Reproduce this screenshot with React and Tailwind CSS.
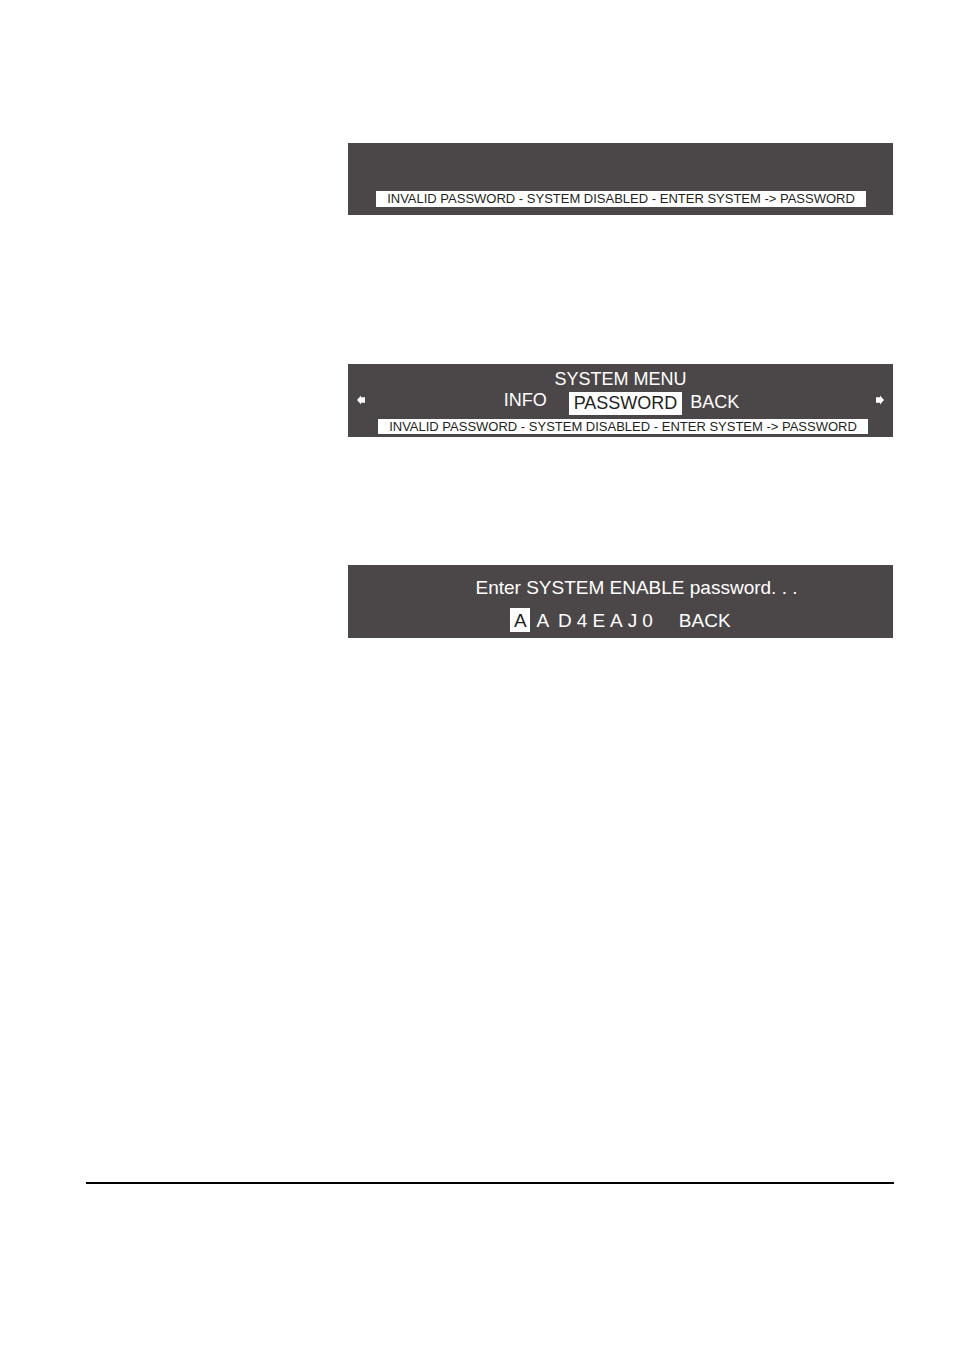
const WARNING = 'INVALID PASSWORD - SYSTEM DISABLED - ENTER SYSTEM -> PASSWORD';

const characters = ['A', 'D', '4', 'E', 'A', 'J', '0'];

function Arrow({ className = '' }) {
  return (
    <svg viewBox="0 0 8 10" className={`w-2 h-[10px] ${className}`} fill="currentColor" aria-hidden="true">
      <path d="M0 5 L4 0.5 V2.2 H8 V7.8 H4 V9.5 Z" />
    </svg>
  );
}

function Panel({ label, className = '', children }) {
  return (
    <section aria-label={label} className={`bg-[#4b4748] text-white ${className}`}>
      {children}
    </section>
  );
}

export default function App() {
  return (
    <div className="min-h-screen bg-white pt-[143px] pl-[86px] pr-[60px] pb-40 font-['Liberation_Sans',Arial,sans-serif]">
      <main className="ml-[262px] mr-px">
        {/* System disabled */}
        <Panel label="System disabled" className="pt-12 pb-2 pl-7 pr-[27px]">
          <p className="bg-white text-[#231f20] text-[13px] leading-4 text-center">{WARNING}</p>
        </Panel>

        {/* System menu */}
        <Panel label="System menu" className="mt-[149px] pt-[3px] pb-[3px]">
          <h2 className="text-[18px] leading-6 text-center">SYSTEM MENU</h2>
          <div className="flex items-start justify-between mt-px px-2 text-[18px]">
            <button type="button" aria-label="Previous" className="flex w-10 h-4 items-center"><Arrow className="ml-px" /></button>
            <nav className="flex items-start pl-[2px]">
              <button type="button" className="leading-4 mr-[22px]">INFO</button>
              <button type="button" className="bg-white text-[#231f20] leading-[23px] px-[5px]">PASSWORD</button>
              <button type="button" className="leading-5 ml-2">BACK</button>
            </nav>
            <button type="button" aria-label="Next" className="flex w-10 h-4 items-center justify-end"><Arrow className="mr-px rotate-180" /></button>
          </div>
          <p className="mt-1 ml-[30px] mr-[25px] bg-white text-[#231f20] text-[13px] leading-[15px] text-center">{WARNING}</p>
        </Panel>

        {/* Password entry */}
        <Panel label="Password entry" className="mt-32 pt-[11px] pb-[6px]">
          <p className="text-[19px] leading-6 text-center pl-8">Enter SYSTEM ENABLE password. . .</p>
          <div className="flex justify-center mt-2 text-[19px] leading-[22px]">
            <button type="button" className="w-5 pt-[2px] bg-white text-[#231f20]">A</button>
            <div className="flex ml-[6px] pt-[2px] gap-[5px]">
              {characters.map((c, i) => (
                <button type="button" key={i} className={i === 0 ? 'mr-1' : ''}>{c}</button>
              ))}
            </div>
            <button type="button" className="ml-[26px] pt-[2px]">BACK</button>
          </div>
        </Panel>
      </main>

      <hr className="mt-[544px] border-0 h-[2px] bg-black" />
    </div>
  );
}
